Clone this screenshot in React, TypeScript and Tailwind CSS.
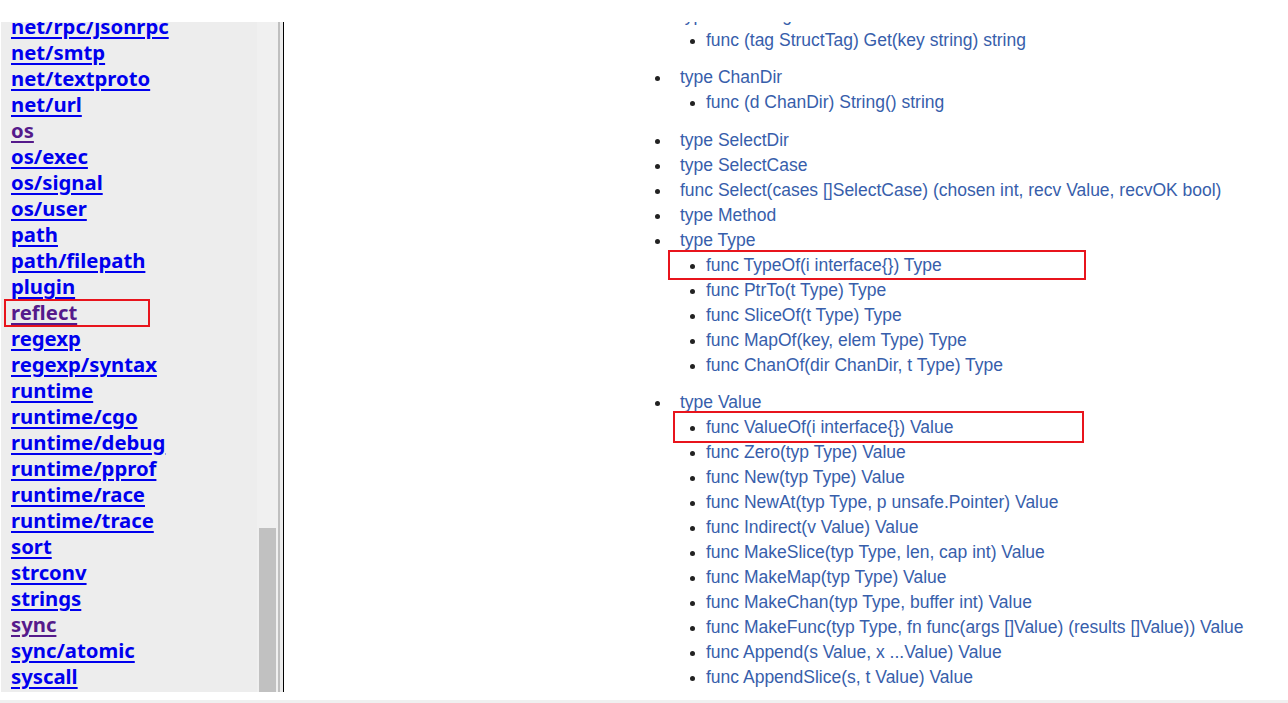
const pkgs: { name: string; visited?: boolean }[] = [
  { name: "net/rpc/jsonrpc" },
  { name: "net/smtp" },
  { name: "net/textproto" },
  { name: "net/url" },
  { name: "os", visited: true },
  { name: "os/exec" },
  { name: "os/signal" },
  { name: "os/user" },
  { name: "path" },
  { name: "path/filepath" },
  { name: "plugin" },
  { name: "reflect", visited: true },
  { name: "regexp" },
  { name: "regexp/syntax" },
  { name: "runtime" },
  { name: "runtime/cgo" },
  { name: "runtime/debug" },
  { name: "runtime/pprof" },
  { name: "runtime/race" },
  { name: "runtime/trace" },
  { name: "sort" },
  { name: "strconv" },
  { name: "strings" },
  { name: "sync", visited: true },
  { name: "sync/atomic" },
  { name: "syscall" },
];

type Entry = { text: string; children?: string[]; gap?: number };

const index: Entry[] = [
  { text: "type StructTag", children: ["func (tag StructTag) Get(key string) string"], gap: 12 },
  { text: "type ChanDir", children: ["func (d ChanDir) String() string"], gap: 13 },
  { text: "type SelectDir" },
  { text: "type SelectCase" },
  { text: "func Select(cases []SelectCase) (chosen int, recv Value, recvOK bool)" },
  { text: "type Method" },
  {
    text: "type Type",
    gap: 12,
    children: [
      "func TypeOf(i interface{}) Type",
      "func PtrTo(t Type) Type",
      "func SliceOf(t Type) Type",
      "func MapOf(key, elem Type) Type",
      "func ChanOf(dir ChanDir, t Type) Type",
    ],
  },
  {
    text: "type Value",
    children: [
      "func ValueOf(i interface{}) Value",
      "func Zero(typ Type) Value",
      "func New(typ Type) Value",
      "func NewAt(typ Type, p unsafe.Pointer) Value",
      "func Indirect(v Value) Value",
      "func MakeSlice(typ Type, len, cap int) Value",
      "func MakeMap(typ Type) Value",
      "func MakeChan(typ Type, buffer int) Value",
      "func MakeFunc(typ Type, fn func(args []Value) (results []Value)) Value",
      "func Append(s Value, x ...Value) Value",
      "func AppendSlice(s, t Value) Value",
    ],
  },
];

const Bullet = () => <span className="block h-[5px] w-[5px] translate-y-[1px] rounded-full bg-[#222]" />;

export default function App() {
  return (
    <div className="relative flex h-[703px] w-[1288px] flex-col overflow-hidden bg-white">
      <div className="h-[22px] shrink-0 bg-white" />
      <div className="flex h-[670px] shrink-0">
        {/* package sidebar */}
        <div className="flex w-[284px] shrink-0">
          <div className="w-[1px] bg-white" />
          <div className="w-[256px] overflow-hidden bg-[#ededed] pl-[10px]">
            <ul className="-mt-[9px]">
              {pkgs.map((p) => (
                <li key={p.name} className="h-[26px] leading-[26px]">
                  <a
                    href="#"
                    className={
                      "font-['Noto_Sans',sans-serif] text-[20.3px] font-bold underline decoration-2 underline-offset-[3px] " +
                      (p.visited ? "text-[#551a8b]" : "text-[#0000ee]")
                    }
                  >
                    {p.name}
                  </a>
                </li>
              ))}
            </ul>
          </div>
          <div className="flex w-[21px] flex-col bg-[#f0f0f0]">
            <div className="h-[506px] shrink-0" />
            <div className="mx-[2px] flex-1 bg-[#c1c1c1]" />
          </div>
          <div className="w-[2px] bg-[#bfbfbf]" />
          <div className="w-[3px] bg-[#ebebeb]" />
          <div className="w-[1px] bg-black" />
        </div>

        {/* index */}
        <div className="flex-1 overflow-hidden pl-[356px] font-['Liberation_Sans',Arial,sans-serif] text-[17.5px] text-[#375eab]">
          <div className="-mt-[19px]">
            {index.map((e) => (
              <div key={e.text} style={{ marginBottom: e.gap ?? 0 }}>
                <div className="flex h-[25px] items-center">
                  <div className="w-[40px] pl-[15px]">
                    <Bullet />
                  </div>
                  <span className="whitespace-nowrap">{e.text}</span>
                </div>
                {e.children?.map((c) => (
                  <div key={c} className="flex h-[25px] items-center pl-[40px]">
                    <div className="w-[26px] pl-[10px]">
                      <Bullet />
                    </div>
                    <span className="whitespace-nowrap">{c}</span>
                  </div>
                ))}
              </div>
            ))}
          </div>
        </div>
      </div>
      <div className="h-[8px] shrink-0 bg-white" />
      <div className="flex-1 bg-[#f0f0f0]" />

      {/* red annotation boxes */}
      <div className="absolute left-[4px] top-[299px] h-[28px] w-[146px] border-2 border-[#e8141c]" />
      <div className="absolute left-[668px] top-[250px] h-[30px] w-[418px] border-2 border-[#e8141c]" />
      <div className="absolute left-[673px] top-[411px] h-[32px] w-[411px] border-2 border-[#e8141c]" />
    </div>
  );
}
